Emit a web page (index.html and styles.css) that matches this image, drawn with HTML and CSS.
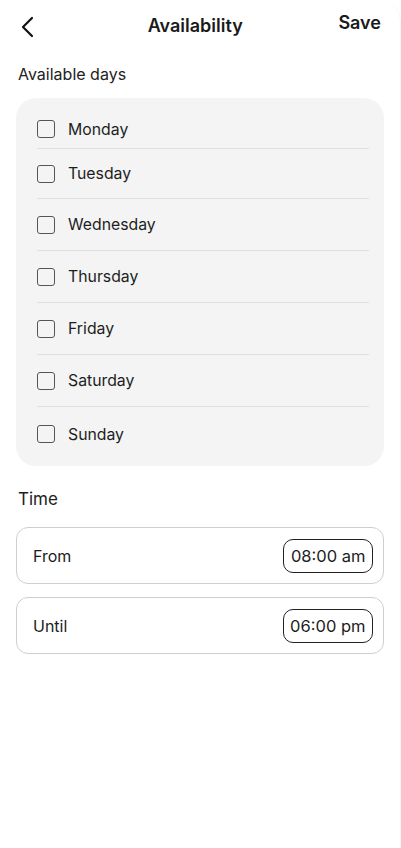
FILE: index.html
```html
<!DOCTYPE html>
<html lang="en">
<head>
    <meta charset="utf-8">
    <title>Availability</title>
    <link rel="stylesheet" href="styles.css">
</head>
<body>
<div class="screen">
    <header class="top">
        <button class="back" aria-label="Back">
            <svg width="14" height="22" viewBox="0 0 14 22"><path d="M12 2 L3 11 L12 20" fill="none" stroke="#111" stroke-width="2.2" stroke-linecap="round" stroke-linejoin="round"/></svg>
        </button>
        <h1>Availability</h1>
        <a class="save" href="#">Save</a>
    </header>

    <p class="label">Available days</p>
    <div class="days">
        <label class="day"><span class="box"></span>Monday</label>
        <label class="day"><span class="box"></span>Tuesday</label>
        <label class="day"><span class="box"></span>Wednesday</label>
        <label class="day"><span class="box"></span>Thursday</label>
        <label class="day"><span class="box"></span>Friday</label>
        <label class="day"><span class="box"></span>Saturday</label>
        <label class="day"><span class="box"></span>Sunday</label>
    </div>

    <h2 class="time-title">Time</h2>
    <div class="time-row">
        <span>From</span>
        <span class="pill">08:00 am</span>
    </div>
    <div class="time-row">
        <span>Until</span>
        <span class="pill">06:00 pm</span>
    </div>
</div>
</body>
</html>
```

FILE: styles.css
```css
body {
    margin: 0;
    background: #fff;
    font-family: Inter, "Noto Sans", sans-serif;
    color: #1c1c1c;
}
.screen {
    height: 848px;
    box-sizing: border-box;
    padding: 0 16px;
    border-right: 1px solid #f6f6f6;
    border-radius: 22px 22px 0 0;
}
.top {
    display: flex;
    align-items: center;
    justify-content: space-between;
    height: 50px;
}
.back {
    border: none;
    background: none;
    padding: 0;
    margin: 4px 0 0 4px;
    width: 20px;
    height: 24px;
    display: flex;
    align-items: center;
}
.top h1 {
    margin: 0 0 0 12px;
    font-size: 18px;
    font-weight: 600;
    color: #1a1a1a;
}
.save {
    color: #1a1a1a;
    text-decoration: none;
    font-size: 18px;
    font-weight: 600;
    margin: -6px 3px 0 0;
}
.label {
    margin: 14px 0 14px 2px;
    font-size: 16px;
    color: #222;
}
.days {
    background: #f4f4f4;
    border-radius: 20px;
    padding: 12px 15px 5px 21px;
    display: flex;
    flex-direction: column;
}
.day {
    display: flex;
    align-items: center;
    height: 52px;
    box-sizing: border-box;
    border-top: 1px solid #e0e0e0;
    font-size: 15.8px;
    color: #1e1e1e;
}
.day:first-child {
    height: 38px;
    border-top: none;
}
.day:nth-child(2) {
    height: 50px;
}
.day:last-child {
    height: 55px;
}
.box {
    width: 18px;
    height: 18px;
    box-sizing: border-box;
    border: 1.5px solid #555;
    border-radius: 3px;
    margin-right: 13px;
}
.time-title {
    margin: 23px 0 18px 2px;
    font-size: 17px;
    font-weight: 400;
    color: #222;
}
.time-row {
    display: flex;
    align-items: center;
    justify-content: space-between;
    height: 57px;
    box-sizing: border-box;
    border: 1px solid #cfcfcf;
    border-radius: 12px;
    padding: 0 10px 0 16px;
    margin-bottom: 13px;
    font-size: 16px;
    font-weight: 400;
}
.pill {
    border: 1px solid #222;
    border-radius: 10px;
    padding: 6px 6.5px;
    font-size: 16.5px;
    font-weight: 400;
}
```
